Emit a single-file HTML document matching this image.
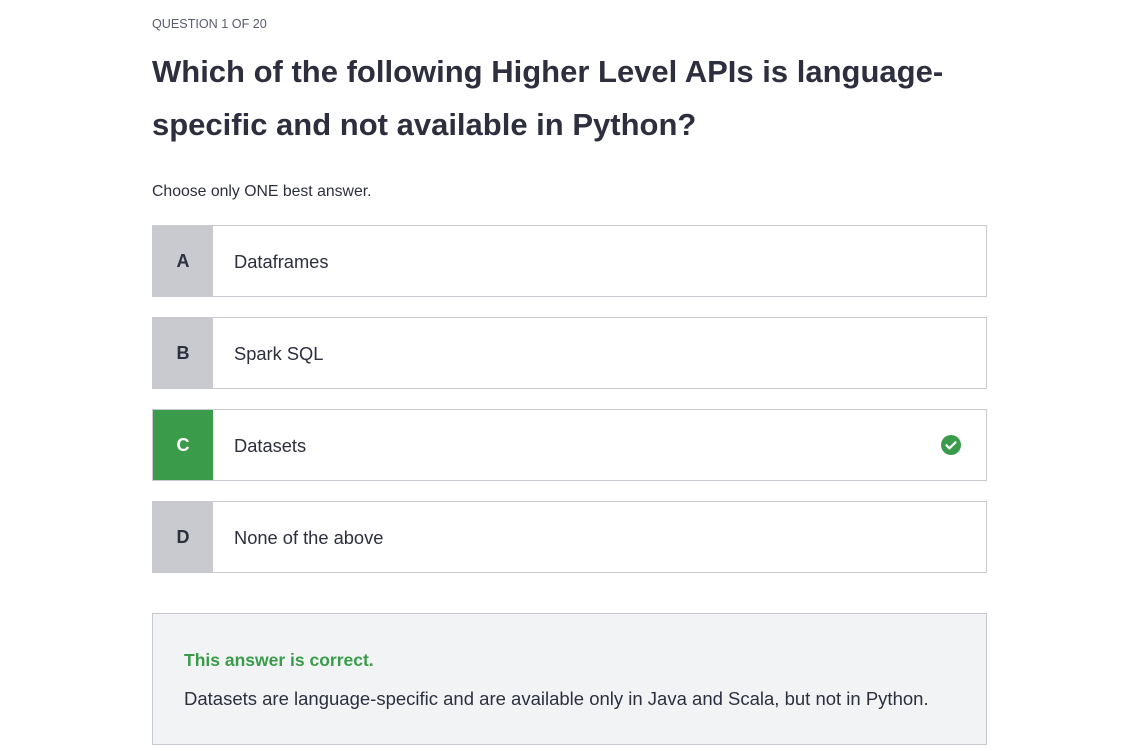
<!DOCTYPE html>
<html><head><meta charset="utf-8"><style>
body{margin:0;background:#fff;font-family:"Liberation Sans",sans-serif;color:#2d2f3e;width:1127px;height:751px;overflow:hidden;position:relative}
.q{position:absolute;left:152px;top:17px;font-size:12.6px;color:#5a5d6b}
h1{position:absolute;left:152px;top:45px;margin:0;font-size:31px;line-height:53px;font-weight:bold;width:840px;color:#2d2f3e}
.c{position:absolute;left:152px;top:183px;font-size:15.8px}
.opt{position:absolute;left:152px;width:833px;height:70px;border:1px solid #c8cad0;background:#fff}
.opt .l{position:absolute;left:0;top:1px;width:60px;height:70px;background:#c8cad0;font-weight:bold;font-size:18px;line-height:70px;text-align:center;color:#2d2f3e}
.opt .l{top:0}
.opt .t{position:absolute;left:81px;top:1px;line-height:70px;font-size:18.3px}
.fb{position:absolute;left:152px;top:613px;width:833px;height:130px;border:1px solid #c8cad0;background:#f2f3f5}
.fb .h{position:absolute;left:31px;top:36px;font-weight:bold;color:#3a9c4a;font-size:17.5px}
.fb .b{position:absolute;left:31px;top:74px;font-size:18.5px}
</style></head><body>
<div class="q">QUESTION 1 OF 20</div>
<h1>Which of the following Higher Level APIs is language-specific and not available in Python?</h1>
<div class="c">Choose only ONE best answer.</div>
<div class="opt" style="top:225px"><div class="l">A</div><div class="t">Dataframes</div></div>
<div class="opt" style="top:317px"><div class="l">B</div><div class="t">Spark SQL</div></div>
<div class="opt" style="top:409px"><div class="l" style="background:#3a9c4a;color:#fff">C</div><div class="t">Datasets</div>
<svg style="position:absolute;left:788px;top:25px" width="20" height="20" viewBox="0 0 20 20"><circle cx="10" cy="10" r="10" fill="#3a9c4a"/><path d="M5.5 10.3l3 3 6-6" stroke="#fff" stroke-width="2.2" fill="none" stroke-linecap="round" stroke-linejoin="round"/></svg></div>
<div class="opt" style="top:501px"><div class="l">D</div><div class="t">None of the above</div></div>
<div class="fb"><div class="h">This answer is correct.</div><div class="b">Datasets are language-specific and are available only in Java and Scala, but not in Python.</div></div>
</body></html>
